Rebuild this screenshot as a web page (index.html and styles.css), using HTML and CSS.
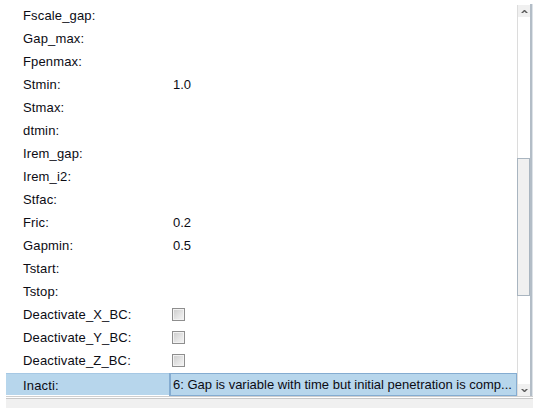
FILE: index.html
```
<!DOCTYPE html>
<html>
<head>
<meta charset="utf-8">
<link rel="stylesheet" href="styles.css">
</head>
<body>
<div class="panel">
  <div class="list">
    <div class="rows">
      <div class="row"><span class="lbl">Fscale_gap:</span><span class="val"></span></div>
      <div class="row"><span class="lbl">Gap_max:</span><span class="val"></span></div>
      <div class="row"><span class="lbl">Fpenmax:</span><span class="val"></span></div>
      <div class="row"><span class="lbl">Stmin:</span><span class="val">1.0</span></div>
      <div class="row"><span class="lbl">Stmax:</span><span class="val"></span></div>
      <div class="row"><span class="lbl">dtmin:</span><span class="val"></span></div>
      <div class="row"><span class="lbl">Irem_gap:</span><span class="val"></span></div>
      <div class="row"><span class="lbl">Irem_i2:</span><span class="val"></span></div>
      <div class="row"><span class="lbl">Stfac:</span><span class="val"></span></div>
      <div class="row"><span class="lbl">Fric:</span><span class="val">0.2</span></div>
      <div class="row"><span class="lbl">Gapmin:</span><span class="val">0.5</span></div>
      <div class="row"><span class="lbl">Tstart:</span><span class="val"></span></div>
      <div class="row"><span class="lbl">Tstop:</span><span class="val"></span></div>
      <div class="row"><span class="lbl">Deactivate_X_BC:</span><span class="val"><span class="chk"></span></span></div>
      <div class="row"><span class="lbl">Deactivate_Y_BC:</span><span class="val"><span class="chk"></span></span></div>
      <div class="row"><span class="lbl">Deactivate_Z_BC:</span><span class="val"><span class="chk"></span></span></div>
      <div class="row sel"><span class="lbl">Inacti:</span><span class="val">6: Gap is variable with time but initial penetration is comp...</span></div>
    </div>
    <div class="vscroll">
      <div class="sbtn">
        <svg width="7" height="5" viewBox="0 0 7 5"><path d="M0 4 L3 1 L4 1 L7 4 L5 4 L3.5 2.5 L2 4 Z" fill="#5a5a5a"/></svg>
      </div>
      <div class="track">
        <div class="gap-top"></div>
        <div class="thumb"></div>
        <div class="gap-bot"></div>
      </div>
      <div class="sbtn">
        <svg width="7" height="5" viewBox="0 0 7 5"><path d="M0 1 L3 4 L4 4 L7 1 L5 1 L3.5 2.5 L2 1 Z" fill="#5a5a5a"/></svg>
      </div>
    </div>
    <div class="edge"></div>
  </div>
  <div class="bottom"></div>
</div>
</body>
</html>
```
FILE: styles.css
```
html, body {
  margin: 0;
  padding: 0;
  background: #ffffff;
}
body {
  font-family: "Liberation Sans", Arial, sans-serif;
  font-size: 13px;
  color: #0c0c14;
}
.panel {
  margin-left: 6px;
  padding-top: 4px;
  width: 527px;
}
.list {
  display: flex;
  height: 392px;
}
.rows {
  width: 511px;
  display: flex;
  flex-direction: column;
}
.row {
  display: grid;
  grid-template-columns: 163px 1fr;
  height: 23px;
  align-items: center;
}
.lbl {
  padding-left: 17px;
  white-space: nowrap;
  letter-spacing: 0.15px;
}
.val {
  padding-left: 4px;
  white-space: nowrap;
  overflow: hidden;
  display: flex;
  align-items: center;
  height: 100%;
}
.chk {
  display: block;
  width: 11px;
  height: 11px;
  margin-left: -1px;
  border: 1px solid #8e8e8e;
  background: linear-gradient(135deg, #cbcbcb 0%, #e6e6e6 60%, #f4f4f4 100%);
  box-shadow: inset 0 0 0 1px #f2f2f2;
}
.row.sel {
  background: #b7d6ec;
  border-top: 1px solid #a6c8e4;
  box-sizing: border-box;
  margin-top: 1px;
  height: 22px;
}
.row.sel .val {
  background: #b7d6ec;
  border: 1px solid #84acd1;
  border-left-width: 2px;
  box-sizing: border-box;
  padding-left: 2px;
  margin-top: -1px;
  height: 23px;
}
.vscroll {
  width: 12px;
  margin-top: 1px;
  border-left: 1px solid #dcdcdc;
  display: flex;
  flex-direction: column;
}
.sbtn {
  height: 12px;
  background: #f0f0f0;
  display: flex;
  align-items: center;
  justify-content: center;
}
.track {
  flex: 1;
  display: flex;
  flex-direction: column;
  background: #ffffff;
}
.gap-top {
  height: 141px;
}
.thumb {
  height: 136px;
  margin-left: -1px;
  background: #f0f0f0;
  border: 1px solid #a9b5c0;
}
.gap-bot {
  flex: 1;
}
.edge {
  width: 2px;
  background: #b3bdc7;
  border-right: 1px solid #dde2e7;
}
.bottom {
  height: 3px;
  border-top: 1px solid #cfcfcf;
  border-bottom: 1px solid #c8c8c8;
  box-sizing: border-box;
}
body::after {
  content: "";
  display: block;
  height: 12px;
  width: 527px;
  margin-left: 6px;
  background: #f0f0f0;
}
```
